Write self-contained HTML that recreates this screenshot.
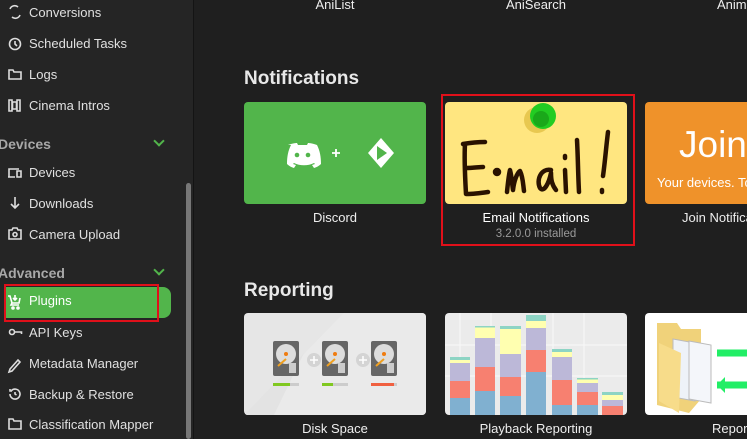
<!DOCTYPE html><html><head><style>
*{margin:0;padding:0;box-sizing:border-box}
body{width:747px;height:439px;overflow:hidden;background:#1f1f1f;font-family:"Liberation Sans",sans-serif;position:relative;color:#e6e6e6}
.sb{position:absolute;left:0;top:0;width:194px;height:439px;background:#252525;border-right:1px solid #141414}
.it{position:absolute;left:29px;font-size:13px;color:#e0e0e0;line-height:16px}
.hd{position:absolute;left:-2px;font-size:14px;font-weight:bold;color:#a8a8a8}
.ch{position:absolute;left:155px;width:8px;height:8px;border-right:2px solid #52b54b;border-bottom:2px solid #52b54b;transform:rotate(45deg)}
.t{position:absolute;font-size:13px;color:#eee;text-align:center;width:182px}
.h2{position:absolute;left:244px;font-size:19px;font-weight:bold;color:#e8e8e8}
.card{position:absolute;width:182px;height:102px;border-radius:4px;overflow:hidden}
</style></head><body>
<div class="sb">
<svg style="position:absolute;left:0;top:0" width="194" height="439" fill="none" stroke="#ddd" stroke-width="1.6">
<path d="M10 9a5 5 0 0 1 8-2M20 15a5 5 0 0 1-8 2"/>
<circle cx="15" cy="44" r="5.5"/><path d="M15 41v3l2 2"/>
<path d="M9 70h4l1 2h7v7H9z"/>
<path d="M9 100h3v11H9zM17 100h3v11h-3zM12.5 102h4v7h-4z"/>
<path d="M9 177v-8h10M8 177h7M17 171h4v6h-4z"/>
<path d="M15 197v11M11 204l4 4 4-4"/>
<path d="M9 230h3l1-2h4l1 2h3v9H9z"/><circle cx="15" cy="234.5" r="2"/>
<circle cx="12" cy="332" r="2.5"/><path d="M14.5 332h7v2"/>
<path d="M10 369l8-9 2 2-8 9-3 1z"/>
<path d="M10 394a5 5 0 1 0 1.5-3.5M10 389v2h2"/><path d="M15 392v2l1.5 1"/>
<path d="M9 419h4l1 2h7v8H9z"/>
</svg>
<div class="it" style="top:5px">Conversions</div>
<div class="it" style="top:36px">Scheduled Tasks</div>
<div class="it" style="top:67px">Logs</div>
<div class="it" style="top:98px">Cinema Intros</div>
<div class="hd" style="top:136px">Devices</div><div class="ch" style="top:137px"></div>
<div class="it" style="top:165px">Devices</div>
<div class="it" style="top:196px">Downloads</div>
<div class="it" style="top:227px">Camera Upload</div>
<div class="hd" style="top:265px">Advanced</div><div class="ch" style="top:266px"></div>
<div style="position:absolute;left:5px;top:287px;width:166px;height:31px;background:#52b54b;border-radius:0 8px 8px 0"></div>
<div style="position:absolute;left:4px;top:284px;width:155px;height:38px;border:2px solid #e0101a"></div>
<svg style="position:absolute;left:0;top:0" width="30" height="320" fill="none" stroke="#fff" stroke-width="1.6"><path d="M8 296h2l2 7h7l1-5M12 303l-1 2h8"/><circle cx="13" cy="308" r="1"/><circle cx="18" cy="308" r="1"/><path d="M15 295v5M13 298l2 2 2-2"/></svg>
<div class="it" style="top:293px;color:#fff">Plugins</div>
<div class="it" style="top:325px">API Keys</div>
<div class="it" style="top:356px">Metadata Manager</div>
<div class="it" style="top:387px">Backup &amp; Restore</div>
<div class="it" style="top:417px">Classification Mapper</div>
<div style="position:absolute;left:186px;top:183px;width:5px;height:256px;background:#777;border-radius:3px"></div>
</div>

<div class="t" style="left:244px;top:-3px">AniList</div>
<div class="t" style="left:445px;top:-3px">AniSearch</div>
<div class="t" style="left:645px;top:-3px;text-align:left;padding-left:72px;width:120px">Anime</div>

<div class="h2" style="top:68px">Notifications</div>
<div class="card" style="left:244px;top:102px;background:#52b54b">
<svg width="182" height="102"><path d="M44 43c5-2 9-2 9-2l1 2c3 0 6 0 9 0l1-2s4 0 9 2c3 6 4 12 4 19-3 3-7 4-7 4l-2-3 3-1-1-1c-6 3-14 3-20 0l-1 1 3 1-2 3s-4-1-7-4c0-7 1-13 4-19z" fill="#fff"/><circle cx="53" cy="53" r="2.3" fill="#52b54b"/><circle cx="64" cy="53" r="2.3" fill="#52b54b"/>
<path d="M88 51h8M92 47v8" stroke="#fff" stroke-width="1.8"/>
<path d="M137 36l13 15-13 15-13-15z" fill="#fff"/><path d="M133 44l10 7-10 7z" fill="#52b54b"/></svg></div>
<div class="t" style="left:244px;top:210px">Discord</div>

<div class="card" style="left:445px;top:102px;background:#ffe680">
<svg width="182" height="102" fill="none" stroke="#2a1200" stroke-width="4.5" stroke-linecap="round" stroke-linejoin="round">
<circle cx="92" cy="18" r="13" fill="#e8c850" stroke="none"/><circle cx="98" cy="14" r="13" fill="#22cc22" stroke="none"/><circle cx="96" cy="17" r="8" fill="#1aa81a" stroke="none"/>
<path d="M40 40c-8 0-16 1-22 2M20 42c-1 16 0 32 1 50M21 66c7 0 13-1 17-1M22 92c7 0 14-1 21-2"/>
<circle cx="52" cy="70" r="2" fill="#2a1200"/>
<path d="M62 90c1-10 2-18 3-22 2 8 2 14 3 20 1-9 4-17 7-19 3 6 3 13 4 20M106 68c-10-2-15 10-11 18 4 5 9-5 11-15 0 7 1 12 5 17M120 68l1 22M120 54v2M132 38c1 18 1 34 2 52M163 30c-2 16-3 30-5 44M157 88v2"/></svg></div>
<div style="position:absolute;left:441px;top:94px;width:194px;height:152px;border:2px solid #e0101a"></div>
<div class="t" style="left:445px;top:210px;color:#fff">Email Notifications</div>
<div class="t" style="left:445px;top:228px;font-size:11.5px;color:#9a9a9a">3.2.0.0 installed</div>

<div class="card" style="left:645px;top:102px;width:110px;background:#ef922a">
<div style="position:absolute;left:34px;top:22px;font-size:37px;color:#fff">Join</div>
<div style="position:absolute;left:12px;top:73px;font-size:13px;color:#fff;white-space:nowrap">Your devices. Tog</div></div>
<div class="t" style="left:645px;top:210px;text-align:left;padding-left:37px">Join Notifications</div>

<div class="h2" style="top:280px">Reporting</div>
<div class="card" style="left:244px;top:313px;background:#e6e6e6">
<svg width="182" height="102"><path d="M0 102L100 0h82v102z" fill="#eaeaea"/><path d="M0 102L60 40 30 102z" fill="#e3e3e3"/>
<g id="hd"><rect x="29" y="28" width="26" height="35" rx="2" fill="#666"/><circle cx="42" cy="41" r="10" fill="#ddd"/><circle cx="42" cy="41" r="2" fill="#f07c10"/><path d="M34 53l8-7" stroke="#f0a020" stroke-width="2"/><rect x="45" y="50" width="7" height="10" fill="#ccc"/></g>
<use href="#hd" x="49"/><use href="#hd" x="98"/>
<circle cx="70" cy="47" r="7" fill="#d4d4d4"/><circle cx="119" cy="47" r="7" fill="#d4d4d4"/>
<path d="M66 47h8M70 43v8M115 47h8M119 43v8" stroke="#fff" stroke-width="1.5"/>
<rect x="29" y="70" width="26" height="3" fill="#ccc"/><rect x="29" y="70" width="17" height="3" fill="#80c820"/>
<rect x="78" y="70" width="26" height="3" fill="#ccc"/><rect x="78" y="70" width="11" height="3" fill="#80c820"/>
<rect x="127" y="70" width="26" height="3" fill="#ccc"/><rect x="127" y="70" width="23" height="3" fill="#f06040"/></svg></div>
<div class="t" style="left:244px;top:421px">Disk Space</div>

<div class="card" style="left:445px;top:313px;background:#ebebeb">
<svg width="182" height="102"><g stroke="#f8f8f8"><path d="M15 0v102M46 0v102M108 0v102M139 0v102M0 32h182M0 63h182"/></g>
<rect x="5" y="44" width="20" height="58" fill="#80b0d0"/><rect x="5" y="44" width="20" height="41" fill="#f78070"/><rect x="5" y="44" width="20" height="24" fill="#bcb8d8"/><rect x="5" y="44" width="20" height="6" fill="#ffffb0"/><rect x="5" y="44" width="20" height="3" fill="#8dd4c4"/>
<rect x="30" y="13" width="20" height="89" fill="#80b0d0"/><rect x="30" y="13" width="20" height="65" fill="#f78070"/><rect x="30" y="13" width="20" height="41" fill="#bcb8d8"/><rect x="30" y="13" width="20" height="12" fill="#ffffb0"/><rect x="30" y="13" width="20" height="1.5" fill="#8dd4c4"/>
<rect x="55" y="13" width="21" height="89" fill="#80b0d0"/><rect x="55" y="13" width="21" height="70" fill="#f78070"/><rect x="55" y="13" width="21" height="51" fill="#bcb8d8"/><rect x="55" y="13" width="21" height="28" fill="#ffffb0"/><rect x="55" y="13" width="21" height="3" fill="#8dd4c4"/>
<rect x="81" y="2" width="20" height="100" fill="#80b0d0"/><rect x="81" y="2" width="20" height="57" fill="#f78070"/><rect x="81" y="2" width="20" height="35" fill="#bcb8d8"/><rect x="81" y="2" width="20" height="13" fill="#ffffb0"/><rect x="81" y="2" width="20" height="6" fill="#8dd4c4"/>
<rect x="107" y="36" width="20" height="66" fill="#80b0d0"/><rect x="107" y="36" width="20" height="56" fill="#f78070"/><rect x="107" y="36" width="20" height="31" fill="#bcb8d8"/><rect x="107" y="36" width="20" height="8" fill="#ffffb0"/><rect x="107" y="36" width="20" height="3" fill="#8dd4c4"/>
<rect x="132" y="65" width="21" height="37" fill="#80b0d0"/><rect x="132" y="65" width="21" height="27" fill="#f78070"/><rect x="132" y="65" width="21" height="14" fill="#bcb8d8"/><rect x="132" y="65" width="21" height="5" fill="#ffffb0"/><rect x="132" y="65" width="21" height="1.5" fill="#8dd4c4"/>
<rect x="157" y="79" width="21" height="23" fill="#f78070"/><rect x="157" y="79" width="21" height="14" fill="#bcb8d8"/><rect x="157" y="79" width="21" height="8" fill="#ffffb0"/><rect x="157" y="79" width="21" height="3" fill="#8dd4c4"/>
</svg></div>
<div class="t" style="left:445px;top:421px">Playback Reporting</div>

<div class="card" style="left:645px;top:313px;width:110px;background:#fff">
<svg width="110" height="102"><path d="M12 10h20l4 6h20v70l-12 14-32-8z" fill="#f0d27a"/><path d="M28 26l22 4v58l-22-4z" fill="#eef2f8" stroke="#bbb"/><path d="M44 28l22 4v58l-22-4z" fill="#f4f6fa" stroke="#bbb"/><path d="M14 30l22 10-2 60-20-12z" fill="#f7dc8a"/>
<path d="M72 40h38M72 72h38" stroke="#22ee66" stroke-width="7"/><path d="M102 32l8 8-8 8M80 64l-8 8 8 8" fill="#22ee66"/></svg></div>
<div class="t" style="left:645px;top:421px;text-align:left;padding-left:67px">Reports</div>
</body></html>
